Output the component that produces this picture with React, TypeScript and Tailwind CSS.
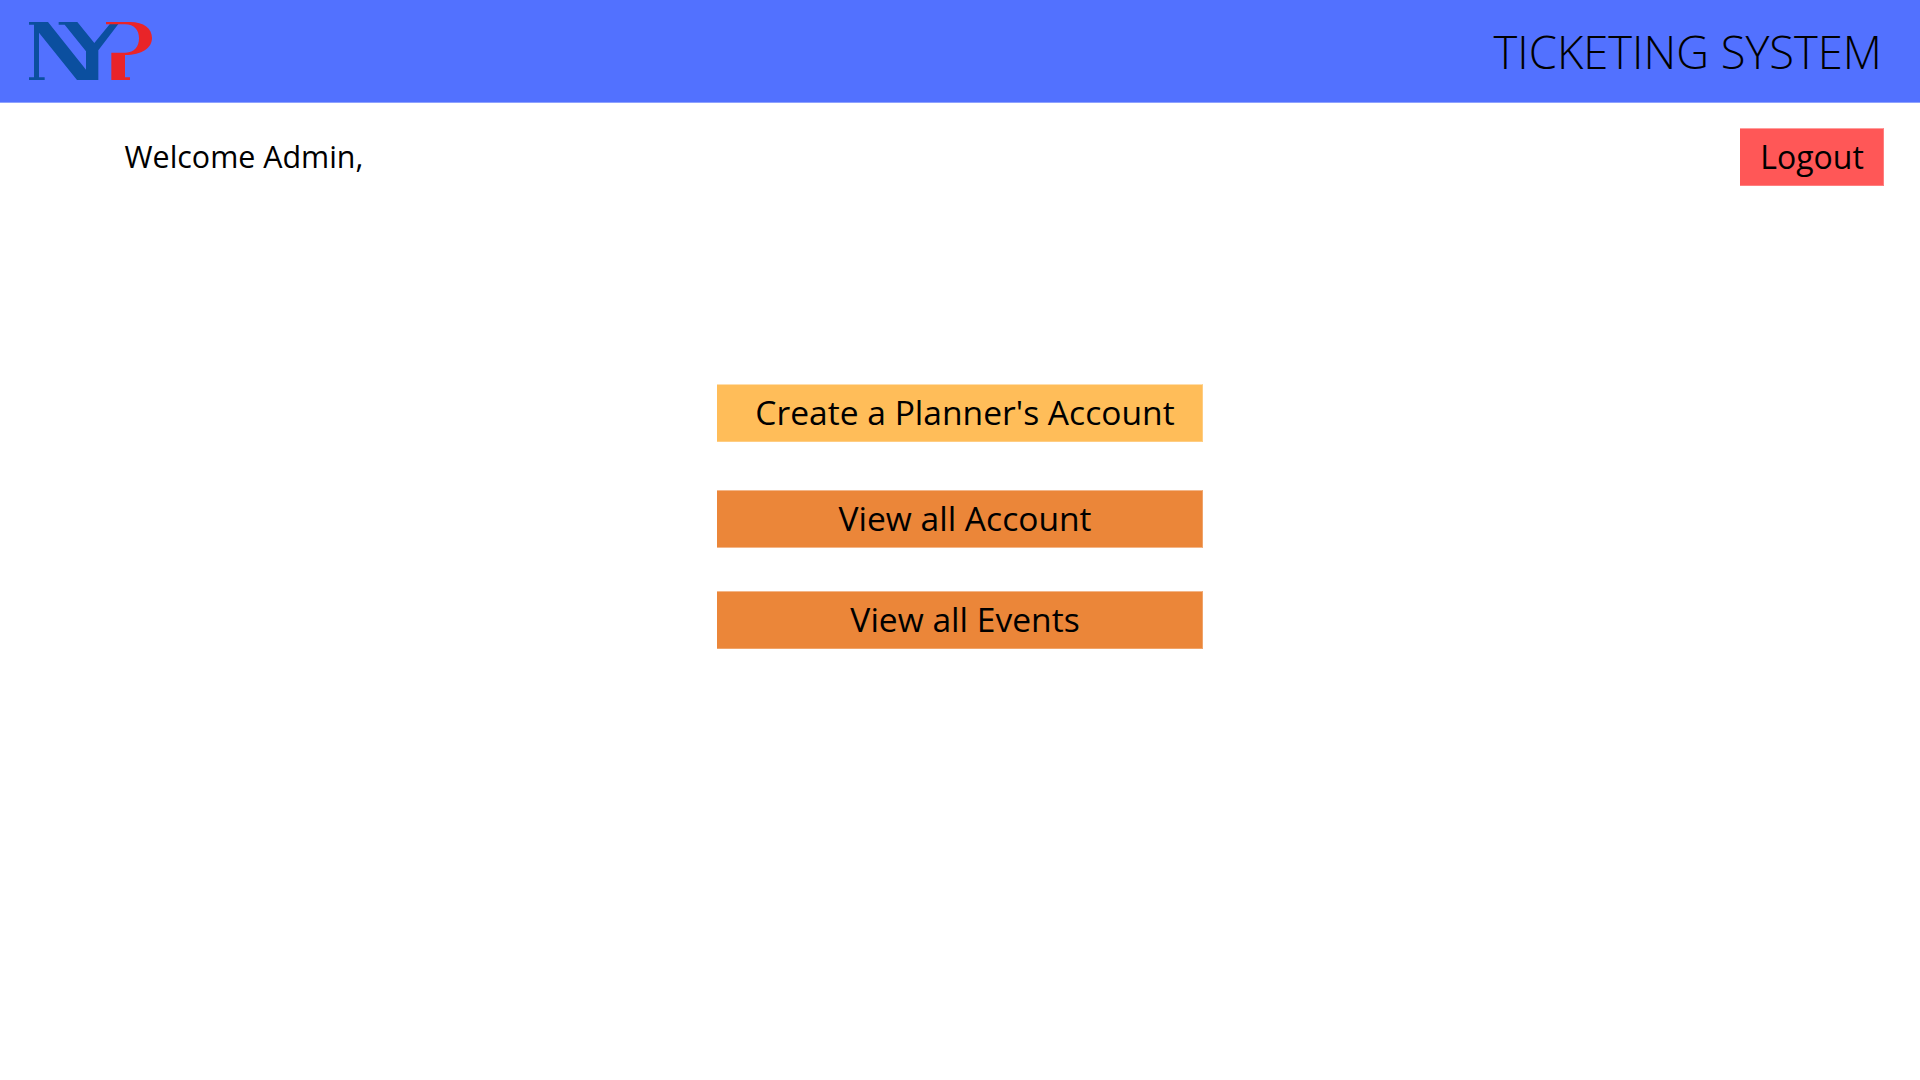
const actions = [
  { label: "Create a Planner's Account", box: "bg-[#ffbd59] border-t-[#ffdeac] border-b-[#ffcd82] border-r-[#ffcd82]" },
  { label: "View all Account", box: "mt-12 bg-[#eb8639] border-t-[#f3b689] border-b-[#f3b689] border-r-[#f0a46a]" },
  { label: "View all Events", box: "mt-[43px] bg-[#eb8639] border-t-[#f3b689] border-b-[#f0a46a] border-r-[#f0a46a]" },
];

function Logo() {
  return (
    <svg className="h-[100px] w-[145px]" viewBox="0 0 435 300" role="img" aria-label="NYP">
      <g fill="#0b4f9f">
        <path d="M27 36H84L198 179V124L134 44H116V36H172L223 99L269 43V38H298L235 121V210H171L57 68V202H74V210H27V202H42V44H27Z" />
      </g>
      <path
        fill="#e92428"
        d="M258 36H330C372 36 396 56 396 84C396 114 366 135 315 135V202H330V210H274V128H317C343 128 357 110 357 85C357 60 343 43 315 43H258Z"
      />
    </svg>
  );
}

export default function App() {
  return (
    <div className="min-h-screen bg-white font-['Open_Sans',sans-serif] text-black">
      <header className="flex h-[103px] items-center justify-between border-b border-[#8ea2ff] bg-[#5271ff] pl-5 pr-[38px]">
        <div className="mt-[17px]">
          <Logo />
        </div>
        <h1 className="pt-0.5 text-[45.33px] font-light leading-[62px]">TICKETING SYSTEM</h1>
      </header>
      <div className="flex items-center justify-between pl-[124.5px] pr-9 pt-[25px]">
        <p className="pb-px text-[30.4px] leading-[56px]">Welcome Admin,</p>
        <button className="h-[58px] w-36 border-y border-r border-b-[#ff7e7e] border-r-[#ff7e7e] border-t-[#ff9c9c] bg-[#ff5757] pl-px text-[32px] leading-[54px]">
          Logout
        </button>
      </div>
      <main className="flex flex-col items-center pt-[198px]">
        {actions.map((a) => (
          <button
            key={a.label}
            className={`h-[58px] w-[486px] border-y border-r pb-0.5 pl-[11px] text-[33.6px] leading-[54px] ${a.box}`}
          >
            {a.label}
          </button>
        ))}
      </main>
    </div>
  );
}
